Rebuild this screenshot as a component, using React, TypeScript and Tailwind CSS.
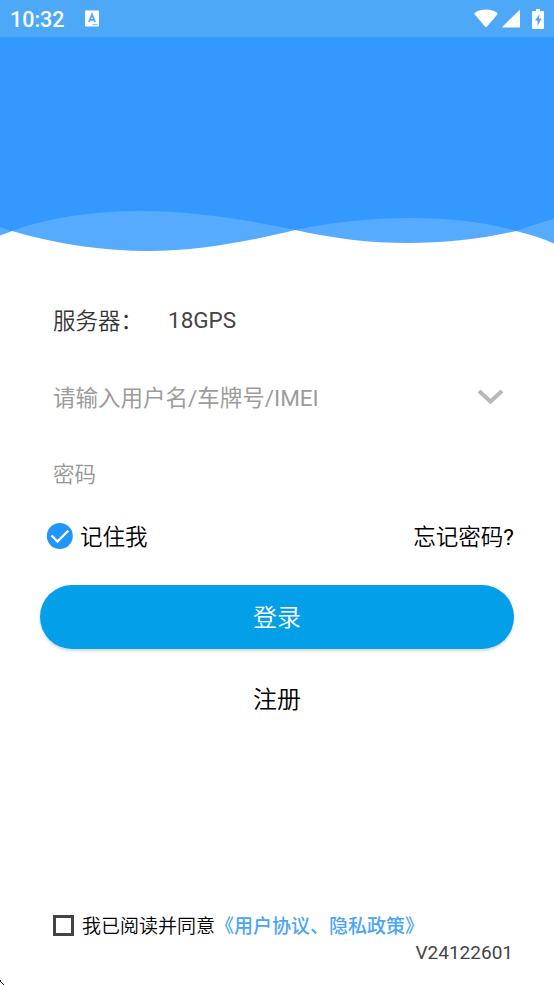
import { useState } from "react";

function StatusBar() {
  return (
    <div className="flex h-[37px] items-center bg-[#4da8f8] pl-[10px] pr-[10px] text-white">
      <span className="w-[74px] pt-[2px] text-[21.5px] font-medium leading-[35px]">10:32</span>
      <svg className="h-[17px] w-[16px]" viewBox="0 0 16 17">
        <rect x="1" y="0.5" width="14" height="16" rx="1" fill="#fff" />
        <path d="M5 12 8 4.500l3 7.500M6 9.800h4" fill="none" stroke="#4da8f8" strokeWidth="1.800" />
        <path d="M8.500 14.700h5" stroke="#4da8f8" strokeWidth="0.800" />
      </svg>
      <div className="ml-auto flex items-center">
        <svg className="h-[19px] w-[24px]" viewBox="0 0 24 19">
          <path d="M1 3.500Q5.500 0.500 12 0.500T23 3.500Q24 4.300 23.300 5.500L13 17.500Q12 18.500 11 17.500L0.700 5.500Q0 4.300 1 3.500Z" fill="#fff" />
        </svg>
        <svg className="ml-[4px] h-[19px] w-[18px]" viewBox="0 0 18 19">
          <path d="M18 0.500V18.500H1Q0 18.500 0.700 17.500Z" fill="#fff" />
        </svg>
        <svg className="ml-[12px] h-[20px] w-[12px]" viewBox="0 0 12 20">
          <path d="M4 0h4v2h3q1 0 1 1v16q0 1-1 1H1q-1 0-1-1V3q0-1 1-1h3z" fill="#fff" />
          <path d="M7.500 5 3 11.500h2.500v5.500L9.500 9.500H7z" fill="#4da8f8" />
        </svg>
      </div>
    </div>
  );
}

function Waves() {
  return (
    <svg className="block h-[218px] w-full" viewBox="0 37 554 218" preserveAspectRatio="none">
      <g fill="#57abff">
        <path d="M0 37V227Q6 229.500 12 231C60 245 105 251 148 251C200 251 250 241 295 230C333 222 371 218 410 218C450 218 485 222 516 231Q540 237 554 243.500V37Z" />
        <path d="M0 37V235.500Q6 233.500 12 231C50 217 95 211 140 211C192 211 250 220 295 230C333 238.500 370 243 408 243C445 243 482 239 516 231Q538 223 554 219V37Z" />
      </g>
      <path
        d="M0 37V227Q6 229.500 12 231C50 217 95 211 140 211C192 211 250 220 295 230C333 222 371 218 410 218C450 218 485 222 516 231Q538 223 554 219V37Z"
        fill="#3399ff"
      />
    </svg>
  );
}

export default function App() {
  const [remember, setRemember] = useState(true);
  const [agreed, setAgreed] = useState(false);

  return (
    <main className="relative flex h-[985px] w-[554px] flex-col overflow-hidden bg-white font-[Roboto,'Noto_Sans_CJK_SC',sans-serif] font-[350] text-black">
      <StatusBar />
      <Waves />

      <div className="mt-[45px] flex h-[40px] items-center pl-[53px] pt-[3px] text-[22.5px] text-[#333]">
        <span className="w-[115px]">服务器：</span>
        <span className="pb-[1px] font-normal text-[#444]">18GPS</span>
      </div>

      <div className="mt-[37px] flex h-[40px] items-center justify-between pl-[53px] pr-[50px]">
        <input
          className="w-[360px] pt-[3px] text-[22.5px] font-normal outline-none placeholder:text-[#9c9c9c]"
          placeholder="请输入用户名/车牌号/IMEI"
        />
        <svg className="h-[18px] w-[27px]" viewBox="0 0 27 18">
          <path d="M2 3 13.500 13.500 25 3" fill="none" stroke="#b8b8b8" strokeWidth="4" />
        </svg>
      </div>

      <div className="mt-[36px] flex h-[40px] items-center pl-[53px]">
        <input
          type="password"
          className="w-[440px] pt-[5px] text-[21.5px] outline-none placeholder:text-[#949494]"
          placeholder="密码"
        />
      </div>

      <div className="mt-[23px] flex h-[40px] items-center justify-between pl-[46px] pr-[40px] text-[22.5px]">
        <button className="flex items-center gap-[7px]" onClick={() => setRemember(!remember)}>
          <svg className="h-[27px] w-[27px]" viewBox="0 0 27 27">
            <circle cx="13.800" cy="13" r="13" fill={remember ? "#2196f8" : "#bbb"} />
            <path d="M5.500 12.500 11.500 18.500 22.300 7.500" fill="none" stroke="#fff" strokeWidth="2.400" />
          </svg>
          <span className="pt-[3px]">记住我</span>
        </button>
        <button className="pt-[3px]">
          忘记密码<span className="font-normal">?</span>
        </button>
      </div>

      <button className="mx-[40px] mt-[29px] h-[64px] shrink-0 rounded-full bg-[#03a0e9] pt-[2px] text-[24px] text-white shadow-[0_2px_3px_rgba(0,70,130,0.2)]">
        登录
      </button>
      <button className="mt-[31px] h-[40px] self-center text-[24px]">注册</button>

      <div className="mt-auto flex h-[30px] items-center pl-[53px] text-[19px]">
        <button
          className="mb-[1px] h-[21px] w-[21px] border-[3px] border-[#444]"
          aria-pressed={agreed}
          onClick={() => setAgreed(!agreed)}
        />
        <span className="ml-[8px] pt-[2px]">我已阅读并同意</span>
        <span className="pt-[2px] font-medium text-[#4ba5f5]">《用户协议、隐私政策》</span>
      </div>
      <p className="mb-[20px] h-[24px] pr-[41px] text-right text-[19px] font-normal leading-[24px] text-[#444]">V24122601</p>

      {/* rounded corner of the device screen */}
      <svg className="absolute bottom-0 left-0 h-[5px] w-[4px]" viewBox="0 0 4 5">
        <path d="M0 1h1v1H0zM1 2h1v1H1zM2 3h1v1H2zM3 4h1v1H3zM0 0h1v1H0z" fill="#111" />
      </svg>
    </main>
  );
}
